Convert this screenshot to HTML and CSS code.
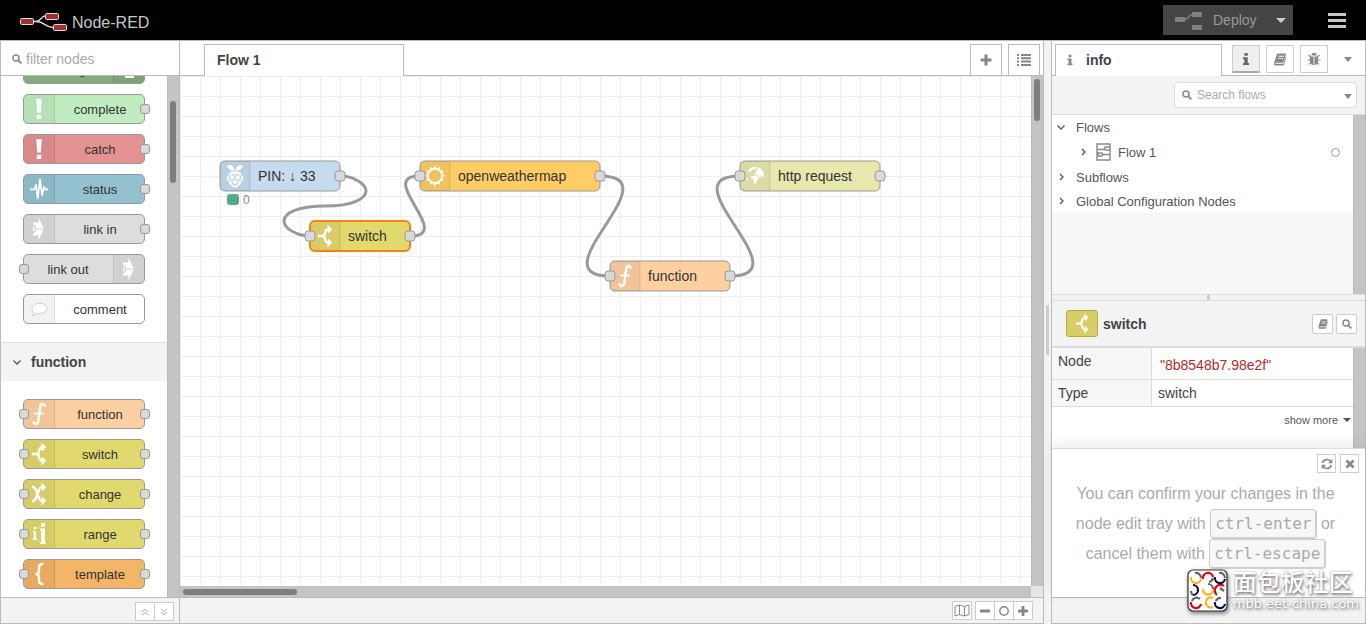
FILE: index.html
```html
<!DOCTYPE html>
<html lang="en">
<head>
<meta charset="utf-8">
<title>Node-RED</title>
<link rel="stylesheet" href="styles.css">
</head>
<body>
<svg class="defs" aria-hidden="true">
  <symbol id="i-bang" viewBox="0 1 20 28"><path fill="#fff" d="M7.300 5h5.400l-.8 13.500H8.100zM7.800 20.700h4.400V25H7.800z"/></symbol>
  <symbol id="i-status" viewBox="0 1 20 28"><path fill="none" stroke="#fff" stroke-width="1.700" stroke-linejoin="bevel" d="M1 15.300h4.500L7 10.500 8.700 25 11 4.500 13 21.500 15 12.500l1 2.800h3"/></symbol>
  <symbol id="i-link" viewBox="0 1 20 28"><path fill="#fff" d="M4 8.500h5.500V3.700L15 15 9.500 26.300V21.500H4z"/><path fill="none" stroke="#d0d0d0" stroke-width="1.200" d="M3.500 11.200a3.900 3.900 0 0 1 0 7.600M7.500 15H16"/></symbol>
  <symbol id="i-comment" viewBox="0 1 20 28"><path fill="#fff" stroke="#ccc" d="M10.500 9.500c4.500 0 7.500 2.300 7.500 5s-3 5-7.500 5c-1 0-1.800 0-2.500-.3C6.500 20.500 5 21.500 3.200 21.500c1-1 1.500-2 1.500-3.400C3.500 17 3 16 3 14.500c0-2.700 3-5 7.500-5z"/></symbol>
  <symbol id="i-fn" viewBox="0 1 20 28"><path fill="none" stroke="#fff" stroke-width="2.400" d="M15.700 7.800C15.500 3.800 11.500 4.200 11.200 8L9.400 21.500C9 26 4.800 26 4.500 22.500"/><path stroke="#fff" stroke-width="1.600" d="M5.200 14.500h10"/></symbol>
  <symbol id="i-switch" viewBox="0 1 20 28"><path fill="none" stroke="#fff" stroke-width="2.400" d="M3 15h5.500M8 15q1.500 0 2-3t3.500-4M8 15q1.500 0 2 3t3.500 4"/><path fill="#fff" d="M12.300 3.500L17.200 8.200 13.300 12.500zM12.300 26.500L17.200 21.800 13.300 17.500z"/></symbol>
  <symbol id="i-change" viewBox="0 1 20 28"><path fill="none" stroke="#fff" stroke-width="2.400" d="M3 8q3 0 4 3l3 8q1 3 4 3M3 22q3 0 4-3l3-8q1-3 4-3"/><path fill="#fff" d="M12.300 3.500L17.200 8.200 13.300 12.500zM12.300 26.500L17.200 21.800 13.300 17.500z"/></symbol>
  <symbol id="i-range" viewBox="0 1 20 28"><path fill="#fff" d="M4.700 8h2.300v2.500H4.700zM4 12h3v7.500h1V21H3.800v-1.500h1v-6H4zM12 4h4v3.700h-4zM11 9.500h5V23h.7v2H11.300v-2h.9V11.500H11z"/><path stroke="#fff" stroke-dasharray="1 1.500" d="M8 9.500l3.500-3M8 20.500l3.500 4"/></symbol>
  <symbol id="i-brace" viewBox="0 1 20 28"><path fill="none" stroke="#fff" stroke-width="2.400" d="M14.300 5h-1Q10 5 10 8.500v3Q10 15 6.500 15 10 15 10 18.500v3Q10 25 13.300 25h1"/></symbol>
  <symbol id="i-debug" viewBox="0 1 20 28"><path fill="none" stroke="#fff" stroke-width="2" d="M5 7h10M5 12h10M5 17h10M6 23h9"/></symbol>
  <symbol id="i-sun" viewBox="0 1 20 28"><path fill="#fff" fill-rule="evenodd" d="M10 4.800l1.900 2.800 2.900-1.600.4 3.300 3.300.4-1.400 3 2.700 2-2.700 2.200 1.400 2.900-3.400.5-.3 3.300-3-1.300-1.800 2.900-1.900-2.900-3 1.300-.4-3.300-3.300-.5 1.300-2.900L0 14.700l2.700-2-1.300-3 3.300-.4.4-3.300 3 1.600zM10 8.700a6.200 6.200 0 1 0 0 12.400 6.200 6.200 0 0 0 0-12.400z"/></symbol>
  <symbol id="i-globe" viewBox="0 1 20 28"><path fill="#fff" d="M2.500 10.500Q5 6.300 9.500 5.700q1.700 0 2.500.8L10 8.500 7.500 8.700 6 10.800zM12.300 6.300Q18.500 7.500 19 14l-1 2.500-1.500-2-1.800 2.500L13 14.500l-2.500-.5-.7-2 2-.5-1-1.800 1.500-1.200zM6 15.500l2.500-1 3 .5 2.300 2.300-1.500 1.700-.7 2.500-1.600 1.800-1.500-2.800-.3-2.500-2-.5zM1 17l1.500.8.8 1.700-1.300-.3z"/></symbol>
  <symbol id="i-pi" viewBox="0 1 20 28"><g fill="#fff"><path d="M9.600 9.800C6.500 10 2.700 8.500 2.300 4.800 5.500 3.500 9 4.800 9.600 9.800zM10.400 9.800c3.100.2 6.900-1.300 7.300-5C14.500 3.500 11 4.800 10.400 9.800z"/><path d="M10 9.500c3.500 0 6 1.500 6.300 4.500 2.700 1.700 2.200 5.500 0 6.700-.8 3-3.800 5.600-6.300 5.600s-5.500-2.600-6.300-5.600c-2.200-1.200-2.700-5 0-6.700C4 11 6.500 9.500 10 9.500z"/></g><g fill="none" stroke="#bcd0e3" stroke-width=".9"><path d="M2.500 10.200Q6.500 11.500 10 9.800q3.500 1.700 7.500.4"/><circle cx="7" cy="16.300" r="2.600"/><circle cx="13" cy="16.300" r="2.600"/><circle cx="10" cy="21.200" r="2.500"/><path d="M7.300 13.500Q10 15 12.700 13.500M3.700 14q1.300 3 .3 6.500M16.300 14q-1.300 3-.3 6.500M4 19q3 .5 4.300 4.800M16 19q-3 .5-4.300 4.800M7.500 24h5"/></g></symbol>
  <symbol id="i-search" viewBox="0 0 12 12"><circle cx="4.800" cy="4.800" r="3.700" fill="none" stroke="currentColor" stroke-width="1.800"/><path stroke="currentColor" stroke-width="2.200" d="M7.500 7.500l3.800 3.800"/></symbol>
  <symbol id="i-book" viewBox="0 0 14 14"><path fill="currentColor" fill-rule="evenodd" d="M5 .5h7.500q1.200 0 .8 1.200L11 9.500q-.3 1-1.200 1H2.500q-.8 0-.7.700.1.500 1 .5h8L13.200 4q.8.300.5 1.200L11.300 12.700q-.3.800-1.200.8H2Q.2 13.500.5 11L3.500 1.700Q4 .5 5 .5zM5.500 3v1H11l.4-1zM4.800 5.300v1h5.500l.4-1z"/></symbol>
  <symbol id="i-info" viewBox="0 0 8 14"><path fill="currentColor" d="M2.500 1h3.200v2.800H2.500zM1 5.200h4.700V11H7v2H1v-2h1.400V7.200H1z"/></symbol>
  <symbol id="i-bug" viewBox="0 0 14 14"><path fill="currentColor" d="M4.300 3.500a2.700 2.700 0 0 1 5.400 0zM3 4.500h3.600V13.300Q3 12.800 3 9zM7.400 4.500H11V9q0 3.800-3.600 4.300z"/><path fill="none" stroke="currentColor" stroke-width="1.200" d="M1.500 3l2.500 2.500M12.500 3L10 5.500M.5 8H4M13.500 8H10M2 12.500L4 10M12 12.500L10 10"/></symbol>
  <symbol id="i-chev" viewBox="0 0 10 10"><path fill="none" stroke="currentColor" stroke-width="1.300" d="M4 2l3 3-3 3"/></symbol>
  <symbol id="i-down" viewBox="0 0 10 10"><path fill="none" stroke="currentColor" stroke-width="1.300" d="M1.500 3.500L5 7l3.500-3.500"/></symbol>
</svg>

<header class="header">
  <svg class="logo" width="48" height="20" viewBox="0 0 48 20"><path fill="none" stroke="#ddd" stroke-width="1.300" d="M14 9.500h2c5 0 5-5.500 9-5.500M16 9.500c9 0 9 6 17 6"/><g fill="#a03030" stroke="#ddd"><rect x=".5" y="6.500" width="13" height="6" rx="1.200"/><rect x="25.500" y="1.500" width="13" height="6" rx="1.200"/><rect x="33.500" y="12.500" width="13" height="6" rx="1.200"/></g></svg>
  <span class="brand">Node-RED</span>
  <div class="deploy">
    <button class="deploy-main" type="button"><svg width="27" height="18" viewBox="0 0 27 18"><path fill="none" stroke="#808080" stroke-width="1.500" d="M9 7.500c5 0 4-5 9-5"/><path fill="#808080" d="M0 5h10v5H0zM17 0h10v5H17zM17 13h10v5H17z"/></svg>Deploy</button>
    <button class="deploy-menu" type="button" aria-label="Deploy options"><i class="caret"></i></button>
  </div>
  <button class="menu" type="button" aria-label="Menu"><i></i><i></i><i></i></button>
</header>

<main class="main">
  <aside class="palette">
    <label class="filter"><svg width="10" height="10"><use href="#i-search"/></svg><input type="text" placeholder="filter nodes" aria-label="filter nodes"></label>
    <div class="palette-body">
      <div class="palette-list">
        <div class="group first">
          <div class="node out-icon debug"><svg class="icon"><use href="#i-debug"/></svg><span>debug</span></div>
          <div class="node complete"><svg class="icon"><use href="#i-bang"/></svg><span>complete</span><i class="port out"></i></div>
          <div class="node catch"><svg class="icon"><use href="#i-bang"/></svg><span>catch</span><i class="port out"></i></div>
          <div class="node status"><svg class="icon"><use href="#i-status"/></svg><span>status</span><i class="port out"></i></div>
          <div class="node link"><svg class="icon"><use href="#i-link"/></svg><span>link in</span><i class="port out"></i></div>
          <div class="node link out-icon"><i class="port in"></i><svg class="icon"><use href="#i-link"/></svg><span>link out</span></div>
          <div class="node comment"><svg class="icon"><use href="#i-comment"/></svg><span>comment</span></div>
        </div>
        <button class="category" type="button"><svg width="10" height="10"><use href="#i-down"/></svg>function</button>
        <div class="group">
          <div class="node function"><i class="port in"></i><svg class="icon"><use href="#i-fn"/></svg><span>function</span><i class="port out"></i></div>
          <div class="node logic"><i class="port in"></i><svg class="icon"><use href="#i-switch"/></svg><span>switch</span><i class="port out"></i></div>
          <div class="node logic"><i class="port in"></i><svg class="icon"><use href="#i-change"/></svg><span>change</span><i class="port out"></i></div>
          <div class="node logic"><i class="port in"></i><svg class="icon"><use href="#i-range"/></svg><span>range</span><i class="port out"></i></div>
          <div class="node template"><i class="port in"></i><svg class="icon"><use href="#i-brace"/></svg><span>template</span><i class="port out"></i></div>
        </div>
      </div>
      <div class="vscroll"><i class="thumb palette-thumb"></i></div>
    </div>
    <footer class="footer palette-footer">
      <div class="btn-group">
        <button type="button" aria-label="Collapse all"><svg width="8" height="8" viewBox="0 0 10 10"><path d="M1.500 5L5 1.500 8.500 5M1.500 9L5 5.500 8.500 9"/></svg></button>
        <button type="button" aria-label="Expand all"><svg width="8" height="8" viewBox="0 0 10 10"><path d="M1.500 1L5 4.500 8.500 1M1.500 5L5 8.500 8.500 5"/></svg></button>
      </div>
    </footer>
  </aside>

  <section class="workspace">
    <div class="tabs">
      <button class="tab flow-tab" type="button">Flow 1</button>
      <div class="tab-tools">
        <button type="button" aria-label="Add flow"><svg width="12" height="12" viewBox="0 0 12 12"><path fill="#888" d="M4.500.500h3v4h4v3h-4v4h-3v-4h-4v-3h4z"/></svg></button>
        <button type="button" aria-label="List flows"><svg width="14" height="12" viewBox="0 0 14 12"><path fill="#888" d="M0 0h2v2H0zM0 3.300h2v2H0zM0 6.600h2v2H0zM0 10h2v2H0zM4 0h10v2H4zM4 3.300h10v2H4zM4 6.600h10v2H4zM4 10h10v2H4z"/></svg></button>
      </div>
    </div>
    <div class="canvas-row">
      <svg class="canvas" role="img" aria-label="Flow 1">
        <defs><pattern id="grid" width="20" height="20" patternUnits="userSpaceOnUse"><path fill="#eee" d="M0 0h20v1H1v19H0z"/></pattern></defs>
        <rect width="100%" height="100%" fill="url(#grid)"/>
        <g class="wires">
          <path d="M160 100C173 100 186 107.500 186 115S173 130 145 130S104 137.500 104 145S117 160 130 160"/>
          <path d="M230 160C275.600 160 194.400 100 240 100"/>
          <path d="M420 100C495 100 355 200 430 200"/>
          <path d="M550 200C625 200 485 100 560 100"/>
        </g>
        <g transform="translate(40 85)">
          <rect class="shape" width="120" height="30" rx="5" fill="#c6dbef"/><path class="shade" d="M5 0H30V30H5Q0 30 0 25V5Q0 0 5 0z"/><path class="rule" d="M30 1v28"/>
          <use href="#i-pi" x="5" width="20" height="30"/><text x="38" y="20">PIN: ↓ 33</text><rect class="port-shape" x="115" y="10" width="10" height="10" rx="3"/>
          <rect x="7" y="33" width="12" height="11" rx="3" fill="#5a8"/><text class="state" x="23" y="43">0</text>
        </g>
        <g transform="translate(240 85)">
          <rect class="shape" width="180" height="30" rx="5" fill="#fc6"/><path class="shade" d="M5 0H30V30H5Q0 30 0 25V5Q0 0 5 0z"/><path class="rule" d="M30 1v28"/>
          <use href="#i-sun" x="5" width="20" height="30"/><text x="38" y="20">openweathermap</text><rect class="port-shape" x="-5" y="10" width="10" height="10" rx="3"/><rect class="port-shape" x="175" y="10" width="10" height="10" rx="3"/>
        </g>
        <g transform="translate(560 85)">
          <rect class="shape" width="140" height="30" rx="5" fill="#e7e7ae"/><path class="shade" d="M5 0H30V30H5Q0 30 0 25V5Q0 0 5 0z"/><path class="rule" d="M30 1v28"/>
          <use href="#i-globe" x="5" width="20" height="30"/><text x="38" y="20">http request</text><rect class="port-shape" x="-5" y="10" width="10" height="10" rx="3"/><rect class="port-shape" x="135" y="10" width="10" height="10" rx="3"/>
        </g>
        <g transform="translate(130 145)">
          <rect width="100" height="30" rx="5" fill="#e2d96e"/><path class="shade" d="M5 0H30V30H5Q0 30 0 25V5Q0 0 5 0z"/><path class="rule" d="M30 1v28"/><rect class="selected" width="100" height="30" rx="5"/>
          <use href="#i-switch" x="5" width="20" height="30"/><text x="38" y="20">switch</text><rect class="port-shape" x="-5" y="10" width="10" height="10" rx="3"/><rect class="port-shape" x="95" y="10" width="10" height="10" rx="3"/>
        </g>
        <g transform="translate(430 185)">
          <rect class="shape" width="120" height="30" rx="5" fill="#fdd0a2"/><path class="shade" d="M5 0H30V30H5Q0 30 0 25V5Q0 0 5 0z"/><path class="rule" d="M30 1v28"/>
          <use href="#i-fn" x="5" width="20" height="30"/><text x="38" y="20">function</text><rect class="port-shape" x="-5" y="10" width="10" height="10" rx="3"/><rect class="port-shape" x="115" y="10" width="10" height="10" rx="3"/>
        </g>
      </svg>
      <div class="vscroll"><i class="thumb canvas-thumb"></i></div>
    </div>
    <div class="hscroll"><div class="htrack"><i></i></div></div>
    <footer class="footer workspace-footer">
      <button class="map" type="button" aria-label="Navigator"><svg width="16" height="13" viewBox="0 0 16 13"><path d="M1 2.500L5.500 1l5 1.500L15 1v9.500L10.500 12l-5-1.500L1 12zM5.500 1v9.500M10.500 2.500V12"/></svg></button>
      <div class="btn-group">
        <button type="button" aria-label="Zoom out"><svg width="10" height="10" viewBox="0 0 10 10"><path class="solid" d="M0 3.500h10v3H0z"/></svg></button>
        <button type="button" aria-label="Reset zoom"><svg width="10" height="10" viewBox="0 0 10 10"><circle class="ring" cx="5" cy="5" r="4.200"/></svg></button>
        <button type="button" aria-label="Zoom in"><svg width="10" height="10" viewBox="0 0 10 10"><path class="solid" d="M3.600 0h2.800v3.600H10v2.800H6.400V10H3.600V6.400H0V3.600h3.600z"/></svg></button>
      </div>
    </footer>
  </section>

  <div class="separator"><i></i></div>

  <aside class="sidebar">
    <div class="tabs">
      <button class="tab info-tab" type="button"><svg width="8" height="12"><use href="#i-info"/></svg>info</button>
      <div class="side-tools">
        <button class="active" type="button" aria-label="Info"><svg width="8" height="14"><use href="#i-info"/></svg></button>
        <button type="button" aria-label="Help"><svg width="14" height="13"><use href="#i-book"/></svg></button>
        <button type="button" aria-label="Debug"><svg width="14" height="14"><use href="#i-bug"/></svg></button>
        <button class="plain" type="button" aria-label="More tabs"><i class="caret small"></i></button>
      </div>
    </div>
    <div class="search-bar"><label class="search"><svg width="10" height="10"><use href="#i-search"/></svg><input type="text" placeholder="Search flows" aria-label="Search flows"><i class="caret small"></i></label></div>
    <div class="outline">
      <ul class="tree">
        <li><svg width="10" height="10"><use href="#i-down"/></svg>Flows</li>
        <li class="child"><svg width="10" height="10"><use href="#i-chev"/></svg><svg class="flow-icon" width="15" height="18" viewBox="0 0 15 18"><path d="M1 1h13v16H1zM1 6.500h5q2 0 3-1M14 11.500H7M1 11h2M9.500 4H14v3H9.500q-1 0-1-1.500T9.500 4zM1 10h4.500q1 0 1 1.500T5.500 13H1"/></svg>Flow 1<i class="dot"></i></li>
        <li class="tight"><svg width="10" height="10"><use href="#i-chev"/></svg>Subflows</li>
        <li class="tight"><svg width="10" height="10"><use href="#i-chev"/></svg>Global Configuration Nodes</li>
      </ul>
      <div class="vscroll edge"></div>
    </div>
    <div class="splitter"><i></i></div>
    <div class="detail-head">
      <span class="chip"><svg width="18" height="25"><use href="#i-switch"/></svg></span><strong>switch</strong>
      <button type="button" aria-label="Show help"><svg width="10" height="10"><use href="#i-book"/></svg></button>
      <button type="button" aria-label="Find node"><svg width="10" height="10"><use href="#i-search"/></svg></button>
    </div>
    <div class="details">
      <div class="details-body">
        <table>
          <tr class="row-node"><th scope="row">Node</th><td class="id">"8b8548b7.98e2f"</td></tr>
          <tr class="row-type"><th scope="row">Type</th><td>switch</td></tr>
        </table>
        <a class="more" href="#">show more<i class="caret tiny"></i></a>
      </div>
      <div class="vscroll edge"></div>
    </div>
    <div class="tips">
      <div class="tip-tools">
        <button type="button" aria-label="Next tip"><svg width="12" height="12" viewBox="0 0 12 12"><path fill="none" stroke="#888" stroke-width="1.700" d="M1.500 5a4.600 4.600 0 0 1 8-1.800M10.500 7a4.600 4.600 0 0 1-8 1.800"/><path fill="#888" d="M11.300.8v4.400H7zM.7 11.200V6.800H5z"/></svg></button>
        <button type="button" aria-label="Close tips"><svg width="10" height="10" viewBox="0 0 10 10"><path stroke="#888" stroke-width="2.800" d="M1.500 1.500l7 7M8.500 1.500l-7 7"/></svg></button>
      </div>
      <p>You can confirm your changes in the node edit tray with <kbd>ctrl-enter</kbd> or cancel them with <kbd>ctrl-escape</kbd></p>
    </div>
    <footer class="footer"></footer>
  </aside>
</main>

<div class="watermark">
  <svg width="42" height="44" viewBox="0 0 42 44"><rect x="1" y="1" width="39" height="41" rx="5" fill="#fff" stroke="#333" stroke-width="1.200"/>
    <g fill="none" stroke-width="2.200">
      <path stroke="#fdb515" d="M4 8a5 5 0 0 0 10 2M16 20a5 5 0 0 0 10 1M26 38a5 5 0 1 1 0-9"/>
      <path stroke="#e60012" d="M16 10a5 5 0 0 1 10-2M37 17a5 5 0 0 0-7 9M4 33a5 5 0 0 0 10 2"/>
      <path stroke="#0b0b4d" d="M28 8a5 5 0 0 0 10 2M6 16a5 5 0 0 1 0 10M28 33a5 5 0 0 0 10 2"/>
      <path stroke="#666" d="M8 4a5 5 0 0 1 6 5M32 4a5 5 0 0 1 6 5M6 26a5 5 0 0 1-2-4M21 15a5 5 0 0 1 5 5M5 32a5 5 0 0 1 8-2M29 32a5 5 0 0 1 5-3M26 9a5 5 0 0 1-4 4M33 19l4 3"/>
    </g></svg>
  <div><b>面包板社区</b><span>mbb.eet-china.com</span></div>
</div>
</body>
</html>
```

FILE: styles.css
```css
* { box-sizing: border-box; }
body { margin: 0; height: 100vh; display: flex; flex-direction: column; overflow: hidden; font: 14px/20px "Liberation Sans", Arial, "Noto Sans CJK SC", sans-serif; color: #444; background: #f3f3f3; }
button, input { font: inherit; color: inherit; margin: 0; padding: 0; border: 0; background: none; }
button { display: flex; align-items: center; justify-content: center; }
svg { flex: none; display: block; }
.defs { position: absolute; width: 0; height: 0; }
.caret { border: 5px solid transparent; border-top-color: currentColor; border-bottom: 0; }
.caret.small { border-width: 5px 4px 0; }
.caret.tiny { border-width: 4px 4px 0; }

.header { flex: none; height: 40px; background: #000; display: flex; align-items: center; padding: 0 20px; }
.logo { margin-top: 4px; }
.brand { margin: 6px auto 0 4px; font-size: 16px; color: #c7c7c7; }
.deploy { display: flex; height: 30px; background: #444; color: #999; margin-right: 35px; }
.deploy-main { gap: 11px; padding-left: 12px; width: 94px; justify-content: flex-start; }
.deploy-main svg { margin-top: 2px; }
.deploy-menu { width: 36px; padding-left: 12px; color: #ccc; }
.menu { width: 18px; flex-direction: column; gap: 3px; }
.menu i { width: 18px; height: 3px; background: #c7c7c7; }

.main { flex: 1; min-height: 0; display: flex; }
.palette, .workspace, .sidebar { border: 1px solid #bbb; display: flex; flex-direction: column; background: #fff; }
.palette { width: 180px; flex: none; }
.workspace { flex: 1; min-width: 0; border-left: 0; }
.sidebar { width: 315px; flex: none; }
.footer { flex: none; height: 26px; background: #f3f3f3; border-top: 1px solid #bbb; display: flex; align-items: center; justify-content: flex-end; }

.filter { flex: none; height: 35px; border-bottom: 1px solid #bbb; display: flex; align-items: center; gap: 4px; padding: 2px 0 0 11px; color: #888; }
.filter input { flex: 1; min-width: 0; outline: 0; }
input::placeholder { color: #aaa; opacity: 1; }
.palette-body { flex: 1; min-height: 0; display: flex; overflow: hidden; }
.palette-list { flex: 1; }
.group { display: flex; flex-direction: column; gap: 10px; padding: 18px 22px; }
.group.first { margin-top: -22px; padding-top: 0; }
.category { width: 100%; height: 39px; background: #f3f3f3; border-top: 1px solid #ddd; justify-content: flex-start; gap: 9px; padding-left: 11px; font-weight: bold; }
.category svg { color: #555; }

.node { position: relative; height: 30px; display: flex; border: 1px solid #999; border-radius: 5px; font-size: 13px; line-height: 30px; color: #333; }
.node .icon { width: 31px; height: 28px; padding: 0 5px; background: rgba(0,0,0,.05); border-right: 1px solid rgba(0,0,0,.1); border-radius: 4px 0 0 4px; }
.node span { flex: 1; text-align: center; padding-left: 1px; }
.out-icon .icon { order: 2; border-right: 0; border-left: 1px solid rgba(0,0,0,.1); border-radius: 0 4px 4px 0; }
.out-icon span { padding: 0 1px 0 0; }
.port { position: absolute; top: 9px; width: 10px; height: 10px; border: 1px solid #999; border-radius: 3px; background: #d9d9d9; }
.port.in { left: -5px; }
.port.out { right: -6px; }
.debug { background: #87a980; }
.complete { background: #c0edc0; }
.catch { background: #e49191; }
.status { background: #94c1d0; }
.link { background: #ddd; }
.comment { background: #fff; }
.function { background: #fdd0a2; }
.logic { background: #e2d96e; }
.template { background: #f3b567; }

.vscroll { flex: none; width: 12px; background: #c3c5c4; border-left: 1px solid #bbb; padding: 3px 2px; }
.thumb { display: block; width: 6px; border-radius: 3px; background: #7b7f7f; }
.palette-thumb { height: 82px; margin-top: 22px; }
.canvas-thumb { height: 42px; }
.btn-group { display: flex; }
.footer button { width: 20px; height: 19px; border: 1px solid #ccc; background: #fff; }
.btn-group button + button { margin-left: -1px; }
.footer path, .footer circle { fill: none; stroke: #888; }
.footer .solid { fill: #888; stroke: none; }
.footer .ring { stroke-width: 1.5px; }
.palette-footer { padding-right: 5px; }
.palette-footer .btn-group { margin-top: 2px; }
.workspace-footer { padding-right: 10px; gap: 3px; }

.tabs { flex: none; height: 35px; display: flex; align-items: flex-end; border-bottom: 1px solid #bbb; }
.tab { height: 32px; margin-bottom: -1px; padding-bottom: 1px; border: 1px solid #bbb; border-bottom: 0; background: #fff; justify-content: flex-start; font-weight: bold; color: #444; }
.flow-tab { width: 200px; margin-left: 24px; padding-left: 12px; }
.tab-tools { margin-left: auto; display: flex; gap: 6px; padding-right: 3px; }
.tab-tools button { width: 32px; height: 31px; border: 1px solid #bbb; border-bottom: 0; }
.canvas-row { flex: 1; min-height: 0; display: flex; }
.canvas { flex: 1; min-width: 0; height: 100%; }
.wires path { fill: none; stroke: #999; stroke-width: 3; }
.shape { stroke: #999; }
.shade { fill: #000; fill-opacity: .05; }
.rule { stroke: #000; stroke-opacity: .1; }
.selected { fill: none; stroke: #ff7f0e; stroke-width: 2; }
.port-shape { fill: #d9d9d9; stroke: #999; }
.canvas text { font-size: 14px; fill: #333; }
.canvas .state { font-size: 12px; fill: #888; }
.hscroll { flex: none; height: 11px; background: #e8e6e4; padding-right: 12px; }
.htrack { height: 11px; background: #c3c5c4; padding: 3px; }
.htrack i { display: block; width: 114px; height: 6px; border-radius: 3px; background: #7b7f7f; }
.separator { flex: none; width: 7px; border-top: 1px solid #bbb; display: flex; align-items: center; justify-content: center; padding-bottom: 6px; }
.separator i { width: 3px; height: 50px; background: #ccc; }

.info-tab { width: 167px; margin-left: 3px; padding-left: 10px; gap: 12px; }
.info-tab svg, .side-tools svg { color: #888; }
.side-tools { margin-left: auto; display: flex; gap: 6px; padding: 0 3px 2px 0; }
.side-tools button { width: 28px; height: 28px; border: 1px solid #ccc; color: #888; }
.side-tools .active { background: #efefef; border-bottom: 2px solid #aaa; }
.side-tools .active svg { color: #666; }
.side-tools .plain { border-color: transparent; }
.search-bar { flex: none; height: 39px; background: #f3f3f3; border-bottom: 1px solid #ddd; display: flex; justify-content: flex-end; align-items: center; padding-right: 8px; }
.search { width: 183px; height: 26px; border: 1px solid #ddd; border-radius: 4px; background: #fff; display: flex; align-items: center; gap: 5px; padding: 0 4px 0 7px; font-size: 12px; color: #888; }
.search input { flex: 1; min-width: 0; outline: 0; }
.search .caret { margin-top: 2px; }
.outline { flex: 1; min-height: 0; display: flex; background: #f7f7f7; }
.edge { background: #c3c5c4; }
.tree { flex: 1; align-self: flex-start; margin: 0; padding: 0; list-style: none; background: #fff; font-size: 13px; color: #555; }
.tree li { height: 25px; display: flex; align-items: center; gap: 10px; padding-left: 4px; }
.tree .tight { height: 24px; padding-top: 2px; }
.tree .child { padding-left: 26px; gap: 7px; }
.tree svg { color: #555; margin-bottom: 2px; }
.flow-icon { margin-left: 1px; }
.flow-icon path { fill: none; stroke: #888; stroke-width: 1.4px; }
.dot { width: 9px; height: 9px; border: 1px solid #999; border-radius: 50%; margin: 0 13px 0 auto; }
.splitter { flex: none; height: 7px; background: #f3f3f3; border: solid #ddd; border-width: 1px 0; display: flex; justify-content: center; }
.splitter i { width: 3px; background: #ccc; }
.detail-head { flex: none; height: 47px; background: #f3f3f3; border-bottom: 2px solid #ddd; display: flex; align-items: center; gap: 4px; padding: 0 8px 0 14px; }
.detail-head strong { flex: 1; padding-left: 1px; }
.chip { width: 32px; height: 27px; border: 1px solid #b5ab3c; border-radius: 3px; background: #d7ce68; display: flex; align-items: center; justify-content: center; }
.detail-head button { width: 21px; height: 20px; border: 1px solid #ccc; border-radius: 2px; background: #fff; color: #888; }
.detail-head button + button { margin-left: -1px; }
.details { flex: none; display: flex; height: 100px; }
.details-body { flex: 1; display: flex; flex-direction: column; }
table { width: 100%; border-spacing: 0; }
th, td { padding: 3px 6px; text-align: left; vertical-align: top; font-weight: normal; border-bottom: 1px solid #ddd; }
th { width: 100px; background: #f7f7f7; border-right: 1px solid #ddd; }
.row-node { height: 32px; }
.row-type { height: 27px; }
.id { padding: 7px 8px 0; color: #b72828; }
.more { align-self: flex-end; display: flex; align-items: center; gap: 5px; padding: 3px 2px 0 0; font-size: 11px; color: #555; text-decoration: none; }
.tips { flex: none; height: 149px; border-top: 1px solid #ddd; background: #fff; box-shadow: 0 -4px 14px rgba(0,0,0,.08); padding-top: 5px; z-index: 1; }
.tip-tools { display: flex; justify-content: flex-end; gap: 4px; padding-right: 6px; }
.tip-tools button { width: 19px; height: 19px; border: 1px solid #ccc; }
.tips p { margin: 6px 18px 0 12px; text-align: center; font-size: 16px; line-height: 30px; color: #aaa; }
kbd { font: 16px/16px "DejaVu Sans Mono", monospace; padding: 4px; border: 1px solid #ccc; border-radius: 3px; background: #f7f7f7; box-shadow: 1px 1px 1px rgba(0,0,0,.2); white-space: nowrap; }

.watermark { position: absolute; right: 7px; bottom: 9px; display: flex; gap: 4px; z-index: 2; color: #fff; text-shadow: 1px 2px 3px #777, 0 0 2px #999; }
.watermark svg { filter: drop-shadow(1px 2px 2px #777); }
.watermark div { display: flex; flex-direction: column; }
.watermark b { font: 500 24px/24px "Noto Sans CJK SC", sans-serif; }
.watermark span { font: 13px/22px "DejaVu Sans", sans-serif; }
```
